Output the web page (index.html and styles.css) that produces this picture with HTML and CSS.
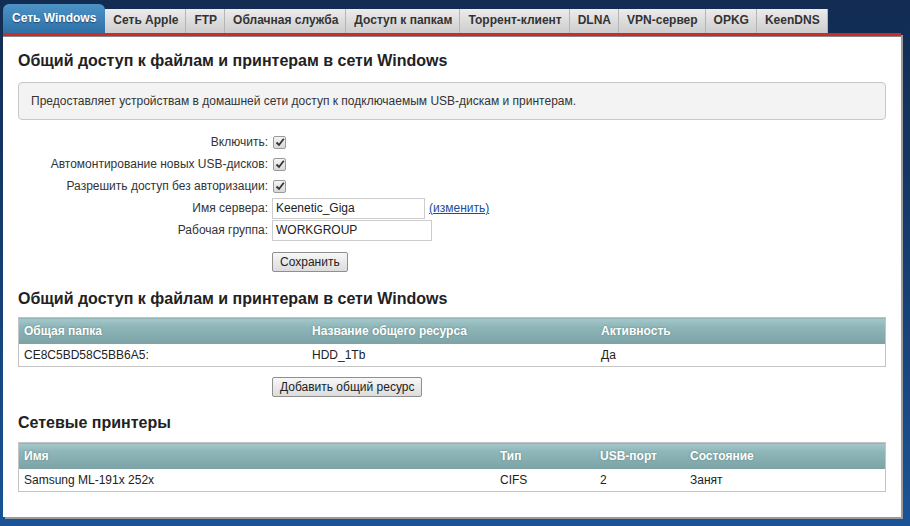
FILE: index.html
```html
<!DOCTYPE html>
<html lang="ru">
<head>
<meta charset="utf-8">
<link rel="stylesheet" href="styles.css">
</head>
<body>
<div class="page">
  <nav class="tabs">
    <span class="tab active">Сеть Windows</span>
    <span class="tab">Сеть Apple</span>
    <span class="tab">FTP</span>
    <span class="tab">Облачная служба</span>
    <span class="tab">Доступ к папкам</span>
    <span class="tab">Торрент-клиент</span>
    <span class="tab">DLNA</span>
    <span class="tab">VPN-сервер</span>
    <span class="tab">OPKG</span>
    <span class="tab">KeenDNS</span>
  </nav>
  <div class="panel">
    <h2 class="heading">Общий доступ к файлам и принтерам в сети Windows</h2>
    <div class="info">Предоставляет устройствам в домашней сети доступ к подключаемым USB-дискам и принтерам.</div>
    <div class="form">
      <div class="label">Включить:</div>
      <div class="ctrl"><span class="check"><svg viewBox="0 0 10 10" width="10" height="10"><path d="M1.5 5.5 L4 8 L8.8 1.8" fill="none" stroke="#333" stroke-width="1.8"/></svg></span></div>
      <div class="label">Автомонтирование новых USB-дисков:</div>
      <div class="ctrl"><span class="check"><svg viewBox="0 0 10 10" width="10" height="10"><path d="M1.5 5.5 L4 8 L8.8 1.8" fill="none" stroke="#333" stroke-width="1.8"/></svg></span></div>
      <div class="label">Разрешить доступ без авторизации:</div>
      <div class="ctrl"><span class="check"><svg viewBox="0 0 10 10" width="10" height="10"><path d="M1.5 5.5 L4 8 L8.8 1.8" fill="none" stroke="#333" stroke-width="1.8"/></svg></span></div>
      <div class="label">Имя сервера:</div>
      <div class="ctrl"><span class="input w1">Keenetic_Giga</span><a class="link" href="#">(изменить)</a></div>
      <div class="label">Рабочая группа:</div>
      <div class="ctrl"><span class="input w2">WORKGROUP</span></div>
      <div class="label"></div>
      <div class="ctrl btnrow"><span class="btn">Сохранить</span></div>
    </div>
    <h2 class="heading h2b">Общий доступ к файлам и принтерам в сети Windows</h2>
    <table class="grid t1">
      <thead><tr><th class="c1">Общая папка</th><th class="c2">Название общего ресурса</th><th>Активность</th></tr></thead>
      <tbody><tr><td>CE8C5BD58C5BB6A5:</td><td>HDD_1Tb</td><td>Да</td></tr></tbody>
    </table>
    <div class="addrow"><span class="btn">Добавить общий ресурс</span></div>
    <h2 class="heading h3b">Сетевые принтеры</h2>
    <table class="grid t2">
      <thead><tr><th class="p1">Имя</th><th class="p2">Тип</th><th class="p3">USB-порт</th><th>Состояние</th></tr></thead>
      <tbody><tr><td>Samsung ML-191x 252x</td><td>CIFS</td><td>2</td><td>Занят</td></tr></tbody>
    </table>
  </div>
</div>
</body>
</html>
```
FILE: styles.css
```css
html, body {
  margin: 0;
  padding: 0;
}
body {
  width: 910px;
  height: 526px;
  overflow: hidden;
  background: linear-gradient(to bottom, #122c52 0%, #15396a 40%, #1a5496 100%);
  font-family: "Liberation Sans", Arial, sans-serif;
  font-size: 12px;
  color: #333;
}
.page {
  padding: 4px 0 0 3px;
  width: 901px;
}
.tabs {
  display: flex;
  align-items: flex-end;
  height: 29px;
}
.tab {
  box-sizing: border-box;
  height: 24px;
  line-height: 23px;
  padding: 0 7px 0 8px;
  font-weight: bold;
  color: #333;
  background: linear-gradient(to bottom, #ececec, #cdcdcd);
  border-right: 1px solid #b5b5b5;
  white-space: nowrap;
}
.tab.active {
  height: 29px;
  line-height: 28px;
  padding: 0 9px 0 9px;
  color: #fff;
  text-shadow: 0 1px 1px #1c4a75;
  background: linear-gradient(to bottom, #4d93c6, #2e70a6);
  border-radius: 6px 6px 0 0;
  border-right: none;
}
.panel {
  background: #fff;
  border-top: 3px solid #cf2a2a;
  box-shadow: inset 0 1px 0 #888, 2px 2px 0 #9a9a9a;
  padding: 12px 15px 24px 15px;
  width: 868px;
  height: 445px;
}
.heading {
  margin: 0;
  font-size: 16px;
  font-weight: bold;
  color: #222;
  line-height: 22px;
  padding-top: 2px;
}
.info {
  margin-top: 10px;
  box-sizing: border-box;
  height: 38px;
  line-height: 36px;
  padding: 0 12px;
  background: #f3f3f3;
  border: 1px solid #c8c8c8;
  border-radius: 4px;
  color: #333;
}
.form {
  display: grid;
  grid-template-columns: 250px 1fr;
  column-gap: 4px;
  margin-top: 11px;
}
.label {
  text-align: right;
  height: 22px;
  line-height: 22px;
}
.ctrl {
  height: 22px;
  display: flex;
  align-items: center;
}
.check {
  box-sizing: border-box;
  width: 13px;
  height: 13px;
  border: 1px solid #9a9a9a;
  border-radius: 2px;
  background: linear-gradient(to bottom, #f4f4f4, #d8d8d8);
  display: flex;
  align-items: center;
  justify-content: center;
  margin-left: 1px;
}
.input {
  box-sizing: border-box;
  height: 21px;
  line-height: 19px;
  border: 1px solid #ccc;
  padding: 0 3px;
  font-size: 12px;
  color: #222;
  background: #fff;
}
.w1 { width: 153px; }
.w2 { width: 160px; }
.link {
  margin-left: 4px;
  color: #1a4e9a;
  text-decoration: underline;
}
.btnrow {
  height: 31px;
  align-items: flex-end;
}
.btn {
  box-sizing: border-box;
  display: inline-block;
  height: 20px;
  line-height: 18px;
  padding: 0 7px;
  border: 1px solid #8f8f8f;
  border-radius: 2px;
  background: linear-gradient(to bottom, #f7f7f7, #dcdcdc);
  color: #222;
  font-size: 12px;
}
.h2b {
  margin-top: 14px;
}
.grid {
  width: 868px;
  border-collapse: collapse;
  border: 1px solid #c4c4c4;
}
.t1 { margin-top: 7px; }
.grid th {
  height: 26px;
  text-align: left;
  padding: 0 5px;
  color: #fff;
  font-weight: bold;
  text-shadow: 0 0 2px #5c8183;
  background: linear-gradient(to bottom, #a5c9cc 0%, #8fb6b8 30%, #7ba3a5 100%);
}
.grid td {
  height: 22px;
  padding: 0 5px;
  color: #222;
}
.c1 { width: 278px; }
.c2 { width: 279px; }
.p1 { width: 466px; }
.p2 { width: 90px; }
.p3 { width: 80px; }
.addrow {
  padding-left: 254px;
  margin-top: 10px;
  height: 20px;
}
.h3b { margin-top: 13px; }
.t2 { margin-top: 8px; }
```
